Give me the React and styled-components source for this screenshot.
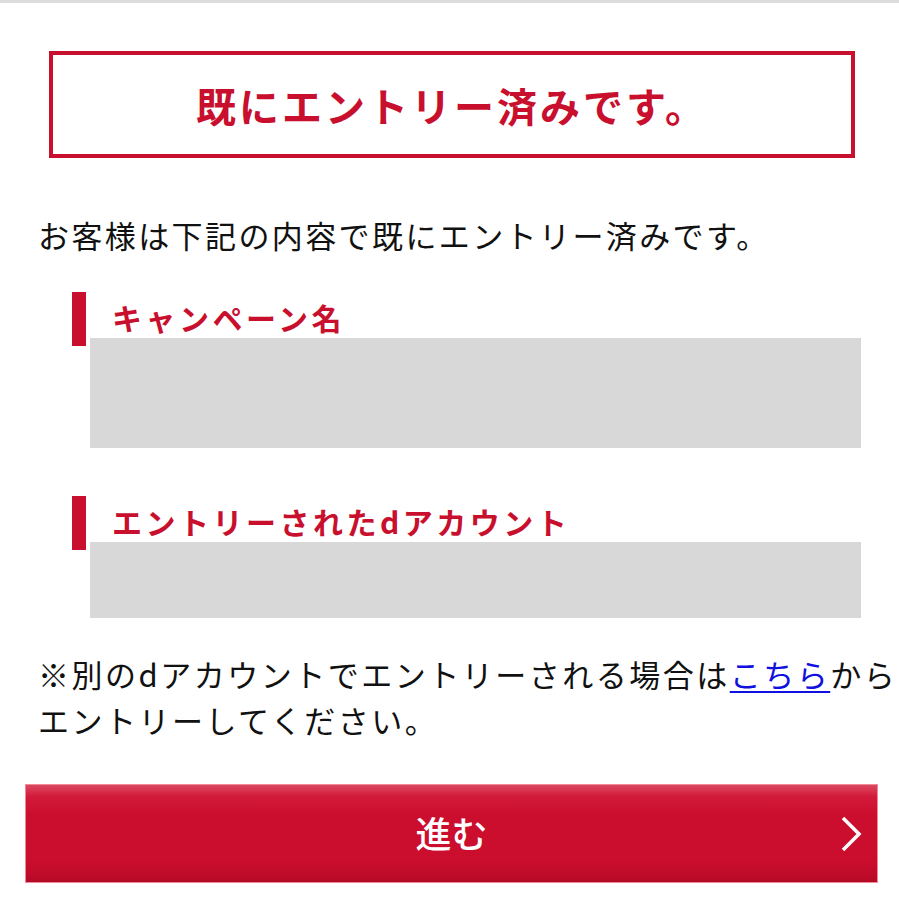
import styled, { createGlobalStyle } from "styled-components";

const GlobalStyle = createGlobalStyle`
  body {
    margin: 0;
    background: #fff;
    font-family: "Noto Sans CJK JP", "Noto Sans", sans-serif;
    color: #111;
  }
`;

const Page = styled.div`
  width: 899px;
  height: 921px;
  overflow: hidden;
  border-top: 3px solid #dcdcdc;
  box-sizing: border-box;
`;

const TitleBox = styled.div`
  margin: 48px 44px 0 49px;
  height: 107px;
  border: 4px solid #c8102e;
  box-sizing: border-box;
  display: flex;
  align-items: center;
  justify-content: center;
  color: #c8102e;
  font-size: 40px;
  font-weight: 700;
  letter-spacing: 3px;
`;

const Lead = styled.p`
  margin: 54px 0 0 38px;
  font-size: 31px;
  line-height: 46px;
  letter-spacing: 2.4px;
  white-space: nowrap;
`;

const Section = styled.section`
  margin: ${(p) => p.$top}px 38px 0 72px;
`;

const Heading = styled.h2`
  margin: 0;
  height: 54px;
  border-left: 14px solid #c8102e;
  padding-left: 26px;
  display: flex;
  align-items: center;
  color: #c8102e;
  font-size: 30px;
  font-weight: 700;
  letter-spacing: 3.5px;
  line-height: 1;
  padding-bottom: 4px;
  box-sizing: border-box;
`;

const Field = styled.div`
  margin: -8px 0 0 18px;
  height: ${(p) => p.$h}px;
  background: #d8d8d8;
`;

const Note = styled.p`
  margin: 33px 0 0 38px;
  font-size: 31px;
  line-height: 46px;
  letter-spacing: 2.5px;
  white-space: nowrap;
`;

const Link = styled.a`
  color: #1010e0;
  text-decoration: underline;
  text-underline-offset: 4px;
  text-decoration-thickness: 2px;
`;

const Button = styled.button`
  margin: 41px 0 0 25px;
  width: 853px;
  height: 99px;
  border: 1px solid #f08a9a;
  background: linear-gradient(
    to bottom,
    #dc4860 0%,
    #d21a3a 12%,
    #cc0e2e 30%,
    #cc0e2e 75%,
    #c00b2a 92%,
    #b20a26 100%
  );
  color: #fff;
  font-family: "Noto Sans CJK JP", sans-serif;
  font-size: 36px;
  font-weight: 500;
  display: flex;
  align-items: center;
  justify-content: center;
  position: relative;
  padding: 0 0 3px;
`;

const Chevron = styled.svg`
  position: absolute;
  right: 14px;
  top: 30px;
  width: 24px;
  height: 38px;
`;

export default function App() {
  return (
    <Page>
      <GlobalStyle />
      <TitleBox>既にエントリー済みです。</TitleBox>
      <Lead>お客様は下記の内容で既にエントリー済みです。</Lead>
      <Section $top={34}>
        <Heading>キャンペーン名</Heading>
        <Field $h={110} />
      </Section>
      <Section $top={48}>
        <Heading>エントリーされたdアカウント</Heading>
        <Field $h={76} />
      </Section>
      <Note>
        ※別のdアカウントでエントリーされる場合は<Link href="#">こちら</Link>から
        <br />
        エントリーしてください。
      </Note>
      <Button>
        進む
        <Chevron viewBox="0 0 24 38">
          <path d="M4 3 L20 19 L4 35" fill="none" stroke="#fff" strokeWidth="3.5" />
        </Chevron>
      </Button>
    </Page>
  );
}
